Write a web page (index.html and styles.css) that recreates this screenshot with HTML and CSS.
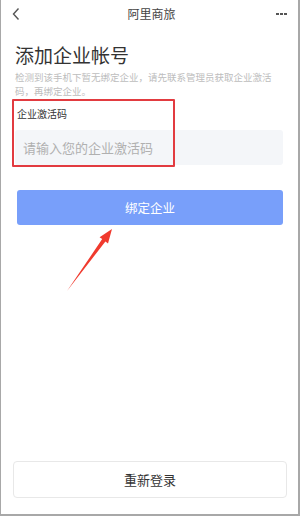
FILE: index.html
```html
<!DOCTYPE html>
<html lang="zh">
<head>
<meta charset="utf-8">
<link rel="stylesheet" href="styles.css">
</head>
<body>
<div class="frame">
  <div class="nav">
    <svg class="back" width="10" height="14" viewBox="0 0 10 14"><path d="M7.5 1.5 L2.5 7 L7.5 12.5" fill="none" stroke="#555" stroke-width="1.4"/></svg>
    <div class="nav-title">阿里商旅</div>
    <div class="dots"><span></span><span></span><span></span></div>
  </div>
  <div class="content">
    <h1 class="title">添加企业帐号</h1>
    <p class="desc">检测到该手机下暂无绑定企业，请先联系管理员获取企业激活码，再绑定企业。</p>
    <div class="label">企业激活码</div>
    <div class="input">请输入您的企业激活码</div>
    <div class="btn-primary">绑定企业</div>
  </div>
  <div class="spacer"></div>
  <div class="btn-secondary">重新登录</div>
  <div class="mark"></div>
  <svg class="arrow" width="300" height="516" viewBox="0 0 300 516"><polygon points="67,291 102.2,239.1 99.6,237.2 112,229 108,243.4 105.4,241.5" fill="#f03a2e"/></svg>
</div>
</body>
</html>
```
FILE: styles.css
```css
html, body { margin: 0; padding: 0; background: #fff; }
body { font-family: "Noto Sans CJK SC", "Noto Sans", sans-serif; }
.frame {
  position: relative;
  width: 300px; height: 516px; box-sizing: border-box;
  border-left: 1px solid #a8a8a8; border-right: 2px solid #a8a8a8; border-bottom: 2px solid #a8a8a8;
  display: flex; flex-direction: column;
  overflow: hidden;
}
.nav { height: 28px; display: flex; align-items: center; padding: 0 10px 0 10px; }
.back { display: block; }
.nav-title { flex: 1; text-align: center; font-size: 12px; color: #444; line-height: 28px; margin-left: 6px; }
.dots { display: flex; gap: 1.5px; width: 12px; }
.dots span { width: 2.5px; height: 2.5px; background: #555; display: block; }
.content { padding: 0 15px 0 14px; }
.title { margin: 14px 0 0; font-size: 19px; line-height: 26px; font-weight: 400; color: #333; letter-spacing: 0; }
.desc { margin: 2px 0 0; font-size: 9.5px; line-height: 14px; color: #bdbdbd; padding-right: 6px; }
.label { margin-top: 9px; font-size: 10px; line-height: 14px; color: #333; padding-left: 2px; }
.input { margin-top: 9px; height: 35px; background: #f4f6f9; border-radius: 3px; font-size: 13px; line-height: 35px; color: #b0b0b0; padding-left: 8px; }
.btn-primary { margin-top: 25px; margin-left: 2px; height: 35px; background: #789ffa; border-radius: 3px; color: #fff; font-size: 12.5px; line-height: 35px; text-align: center; }
.spacer { flex: 1; }
.btn-secondary { margin: 0 11px 16px 12px; height: 35px; border: 1px solid #e8e8e8; border-radius: 4px; text-align: center; font-size: 13px; line-height: 35px; color: #333; }
.mark { position: absolute; left: 11px; top: 99px; width: 159px; height: 64px; border: 2px solid #e23b40; border-radius: 1px; }
.arrow { position: absolute; left: -1px; top: 0; }
```
